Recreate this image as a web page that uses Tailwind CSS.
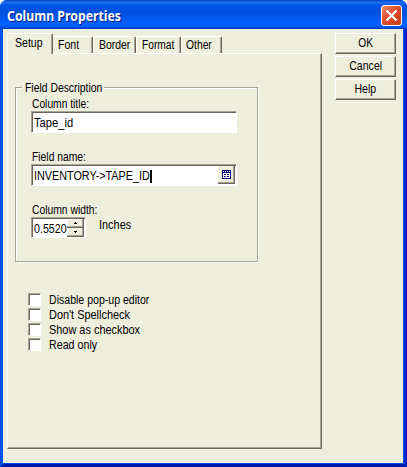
<!DOCTYPE html>
<html lang="en">
<head>
<meta charset="utf-8">
<title>Column Properties</title>
<script src="https://cdn.jsdelivr.net/npm/@tailwindcss/browser@4"></script>
</head>
<body class="w-[407px] h-[467px] overflow-hidden bg-white font-['Liberation_Sans',Arial,sans-serif] text-[12px] leading-[17px] text-black whitespace-nowrap">
<div class="w-[407px] h-[467px] rounded-t-[7px] overflow-hidden bg-[#0046e5] flex flex-col">
  <header class="h-[29px] shrink-0 flex items-center justify-between pl-[7px] pr-[5px] bg-[linear-gradient(180deg,#0040c8_0%,#2070f0_8%,#0055e8_18%,#0050dc_45%,#0060fc_75%,#0062ff_88%,#003cc0_100%)]">
    <h1 class="font-['Noto_Sans',sans-serif] font-bold text-[13.5px] text-white pt-[3px] [text-shadow:1px_1px_0_#0a1883] origin-left scale-x-[0.91]">Column Properties</h1>
    <button class="w-[21px] h-[21px] mt-[2px] rounded-[3px] border border-white bg-[linear-gradient(135deg,#f09070_0%,#e05030_40%,#c83810_100%)] flex items-center justify-center" aria-label="Close">
      <svg width="13" height="13" viewBox="0 0 13 13"><path d="M1.5 1.5L11.5 11.5M11.5 1.5L1.5 11.5" stroke="#fff" stroke-width="2.2"/></svg>
    </button>
  </header>
  <main class="flex-1 flex items-start bg-[#eeeedd] border-x-[3px] border-b-[3px] border-l-[#0050f0] border-r-[#0028c8] border-b-[#0018a8] pl-[4px] pt-[4px] shadow-[inset_-1px_-1px_0_#0050f0]">
    <div class="w-[315px] flex flex-col">
      <nav class="h-[20px] flex items-end">
        <div class="relative z-10 w-[46px] h-[21px] -mb-px bg-[#eeeedd] border-t border-l border-white border-r border-r-[#6b655a] shadow-[inset_-1px_0_0_#a5a595] rounded-t-[2px] pt-px pl-[7px]"><span class="inline-block origin-left scale-x-[0.88]">Setup</span></div>
        <div class="w-[40px] h-[17px] border-t border-white border-r border-r-[#6b655a] shadow-[inset_-1px_0_0_#a5a595] rounded-tr-[2px] pl-[5px]"><span class="inline-block origin-left scale-x-[0.88]">Font</span></div>
        <div class="w-[43px] h-[17px] border-t border-l border-white border-r border-r-[#6b655a] shadow-[inset_-1px_0_0_#a5a595] rounded-t-[2px] pl-[5px]"><span class="inline-block origin-left scale-x-[0.87]">Border</span></div>
        <div class="w-[45px] h-[17px] border-t border-l border-white border-r border-r-[#6b655a] shadow-[inset_-1px_0_0_#a5a595] rounded-t-[2px] pl-[5px]"><span class="inline-block origin-left scale-x-[0.85]">Format</span></div>
        <div class="w-[41px] h-[17px] border-t border-l border-white border-r border-r-[#6b655a] shadow-[inset_-1px_0_0_#a5a595] rounded-t-[2px] pl-[4px]"><span class="inline-block origin-left scale-x-[0.86]">Other</span></div>
      </nav>
      <section class="h-[396px] border-t border-l border-white border-r border-b border-r-[#6b655a] border-b-[#6b655a] shadow-[inset_-1px_-1px_0_#a5a595] pl-[7px] pt-[33px]">
        <div class="w-[243px] h-[175px] border border-[#a5a595] shadow-[1px_1px_0_#fff,inset_1px_1px_0_#fff] pl-[15px] flex flex-col items-start">
          <div class="-mt-[8px] -ml-[9px] pl-[3px] h-[15px] w-[82px] bg-[#eeeedd]"><span class="inline-block origin-left scale-x-[0.865]">Field Description</span></div>
          <label class="mt-[1px] ml-[1px] h-[15px] inline-block origin-left scale-x-[0.855]">Column title:</label>
          <div class="w-[206px] h-[22px] bg-white border border-t-[#a5a595] border-l-[#a5a595] border-white shadow-[inset_1px_1px_0_#6b655a] pl-[2px] pt-[3px]"><span class="inline-block origin-left scale-x-[0.93]">Tape_id</span></div>
          <label class="mt-[16px] ml-[1px] h-[15px] inline-block origin-left scale-x-[0.86]">Field name:</label>
          <div class="w-[206px] h-[22px] bg-white border border-t-[#a5a595] border-l-[#a5a595] border-white shadow-[inset_1px_1px_0_#6b655a] pl-[2px] pt-px pr-[1px] flex items-start justify-between">
            <div class="flex w-[160px] pt-[2px]"><span class="w-[116px] inline-block"><span class="inline-block origin-left scale-x-[0.9]">INVENTORY-&gt;TAPE_ID</span></span><i class="w-[2px] h-[13px] bg-black mt-[2px]"></i></div>
            <button class="w-[17px] h-[18px] bg-[#eeeedd] border-r border-b border-[#6b655a] shadow-[inset_-1px_-1px_0_#a5a595] flex items-center justify-center" aria-label="Choose field">
              <svg width="9" height="9" viewBox="0 0 9 9" shape-rendering="crispEdges"><path d="M0 0h9v9H0z" fill="#000080"/><path d="M1 3h7v5H1zM1 1h1v1H1zM3 1h1v1H3zM5 1h1v1H5zM7 1h1v1H7z" fill="#fff"/><path d="M2 4h2v1H2zM5 4h2v1H5zM2 6h2v1H2zM5 6h2v1H5z" fill="#000080"/></svg>
            </button>
          </div>
          <label class="mt-[16px] ml-[1px] h-[15px] inline-block origin-left scale-x-[0.86]">Column width:</label>
          <div class="flex">
            <div class="w-[55px] h-[21px] bg-white border border-t-[#a5a595] border-l-[#a5a595] border-white shadow-[inset_1px_1px_0_#6b655a] pl-[2px] pr-px pt-px flex justify-between">
              <div class="w-[34px] overflow-hidden pt-[2px]"><span class="inline-block origin-left scale-x-[0.89]">0.55208</span></div>
              <div class="w-[17px] flex flex-col">
                <button class="h-[9px] bg-[#eeeedd] border-r border-b border-[#6b655a] shadow-[inset_-1px_-1px_0_#a5a595,inset_1px_1px_0_#fff] flex items-center justify-center" aria-label="Increase"><svg width="3" height="2" viewBox="0 0 3 2" shape-rendering="crispEdges"><path d="M1 0h1v1h1v1H0V1h1z"/></svg></button>
                <button class="h-[10px] bg-[#eeeedd] border-r border-b border-[#6b655a] shadow-[inset_-1px_-1px_0_#a5a595,inset_1px_1px_0_#fff] flex items-center justify-center" aria-label="Decrease"><svg width="3" height="2" viewBox="0 0 3 2" shape-rendering="crispEdges"><path d="M0 0h3v1H2v1H1V1H0z"/></svg></button>
              </div>
            </div>
            <span class="ml-[13px] inline-block origin-left scale-x-[0.91]">Inches</span>
          </div>
        </div>
        <div class="mt-[31px] pl-[13px] flex flex-col">
          <label class="h-[15px] flex"><i class="w-[13px] h-[13px] bg-white border border-t-[#a5a595] border-l-[#a5a595] border-white shadow-[inset_1px_1px_0_#6b655a] mr-[8px]"></i><span class="-mt-px inline-block origin-left scale-x-[0.88]">Disable pop-up editor</span></label>
          <label class="h-[15px] flex"><i class="w-[13px] h-[13px] bg-white border border-t-[#a5a595] border-l-[#a5a595] border-white shadow-[inset_1px_1px_0_#6b655a] mr-[8px]"></i><span class="-mt-px inline-block origin-left scale-x-[0.91]">Don't Spellcheck</span></label>
          <label class="h-[15px] flex"><i class="w-[13px] h-[13px] bg-white border border-t-[#a5a595] border-l-[#a5a595] border-white shadow-[inset_1px_1px_0_#6b655a] mr-[8px]"></i><span class="-mt-px inline-block origin-left scale-x-[0.91]">Show as checkbox</span></label>
          <label class="h-[15px] flex"><i class="w-[13px] h-[13px] bg-white border border-t-[#a5a595] border-l-[#a5a595] border-white shadow-[inset_1px_1px_0_#6b655a] mr-[8px]"></i><span class="-mt-px inline-block origin-left scale-x-[0.89]">Read only</span></label>
        </div>
      </section>
    </div>
    <aside class="ml-[13px] w-[61px] flex flex-col gap-[2px]">
      <button class="h-[21px] border-t border-l border-white border-r border-b border-r-[#6b655a] border-b-[#6b655a] shadow-[inset_-1px_-1px_0_#a5a595] flex justify-center pt-[1px]"><span class="inline-block scale-x-[0.85]">OK</span></button>
      <button class="h-[21px] border-t border-l border-white border-r border-b border-r-[#6b655a] border-b-[#6b655a] shadow-[inset_-1px_-1px_0_#a5a595] flex justify-center pt-[1px]"><span class="inline-block scale-x-[0.88]">Cancel</span></button>
      <button class="h-[21px] border-t border-l border-white border-r border-b border-r-[#6b655a] border-b-[#6b655a] shadow-[inset_-1px_-1px_0_#a5a595] flex justify-center pt-[1px]"><span class="inline-block scale-x-[0.88]">Help</span></button>
    </aside>
  </main>
</div>
</body>
</html>
